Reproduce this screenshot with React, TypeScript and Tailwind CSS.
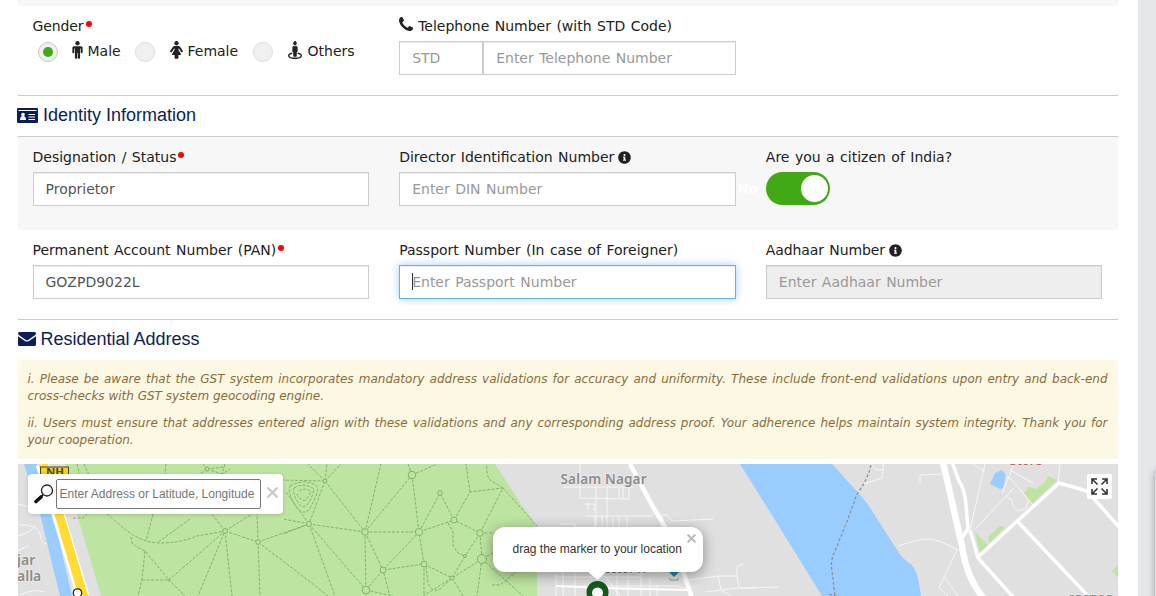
import React from "react";
import { FaInfoCircle, FaStreetView } from "react-icons/fa";

const font = "font-['DejaVu_Sans',sans-serif]";
const label = "flex h-5 items-center whitespace-pre text-[14px] leading-5 [word-spacing:1px] text-[#212121]";
const field =
  "block h-[34px] w-full rounded-none border border-[#ccc] bg-white px-3 text-[14px] [word-spacing:1px] text-[#555] shadow-[inset_0_1px_1px_rgba(0,0,0,0.075)] outline-none placeholder:text-[#999] placeholder:opacity-100";

function Dot() {
  return <span className="mb-[5px] ml-[2px] size-[6px] rounded-full bg-[#f00]" />;
}

function PhoneIcon() {
  return (
    <svg viewBox="0 128 1408 1408" className="mb-[4px] mr-[5px] size-[14px]" fill="#212121">
      <path d="M1408 1240q0 27-10 70.5t-21 68.5q-21 50-122 106-94 51-186 51-27 0-53-3.5t-57.5-12.5-47-14.5-55.5-20.5-49-18q-98-35-175-83-127-79-264-216t-216-264q-48-77-83-175-3-9-18-49t-20.5-55.5-14.5-47-12.5-57.5-3.5-53q0-92 51-186 56-101 106-122 25-11 68.5-21t70.5-10q14 0 21 3 18 6 53 76 11 19 30 54t35 63.5 31 53.5q3 4 17.5 25t21.5 35.5 7 28.5q0 20-28.5 50t-62 55-62 53-28.5 46q0 9 5 22.5t8.5 20.5 14 24 11.5 19q76 137 174 235t235 174q2 1 19 11.5t24 14 20.5 8.5 22.5 5q18 0 46-28.5t53-62 55-62 50-28.5q14 0 28.5 7t35.5 21.5 25 17.5q25 15 53.5 31t63.5 35 54 30q70 35 76 53 3 7 3 21z" />
    </svg>
  );
}

function MaleIcon() {
  return (
    <svg viewBox="0 0 1024 1792" className="h-[18px] w-[11px]" fill="#212121">
      <circle cx="512" cy="224" r="215" />
      <path d="M1024 704v416q0 40-28 68t-68 28-68-28-28-68V744h-64v912q0 46-33 79t-79 33-79-33-33-79v-472h-64v472q0 46-33 79t-79 33-79-33-33-79V744h-64v376q0 40-28 68t-68 28-68-28-28-68V704q0-80 56-136t136-56h640q80 0 136 56t56 136z" />
    </svg>
  );
}

function FemaleIcon() {
  return (
    <svg viewBox="0 0 1280 1792" className="h-[18px] w-[13px]" fill="#212121">
      <circle cx="640" cy="224" r="215" />
      <path d="M1280 1032q0 40-28 68t-68 28q-51 0-80-43L877 744h-45v132l247 411q9 15 9 33 0 26-19 45t-45 19H832v272q0 46-33 79t-79 33H560q-46 0-79-33t-33-79v-272H256q-26 0-45-19t-19-45q0-18 9-33l247-411V744h-45l-227 341q-29 43-80 43-40 0-68-28t-28-68q0-29 16-53l256-384q73-107 176-107h384q103 0 176 107l256 384q16 24 16 53z" />
    </svg>
  );
}

function Radio({ checked = false }: { checked?: boolean }) {
  return (
    <span
      className={
        "flex size-5 items-center justify-center rounded-full border bg-[#f0f0f0] " +
        (checked ? "border-[#b9d3b4]" : "border-[#ddd]")
      }
    >
      {checked && <span className="size-[10px] rounded-full bg-[#41a913]" />}
    </span>
  );
}

const nodes: [number, number, number][] = [
  [225, 531, 2.5], [258, 542, 2.3], [169, 580, 1], [207, 469, 2], [325, 481, 2], [309, 524, 2.5], [365, 532, 3.3],
  [412, 475, 3.8], [419, 532, 3.6], [440, 493, 2.3], [454, 520, 3], [480, 533, 3.3], [383, 570, 3], [424, 564, 3],
  [366, 590, 3.8], [482, 559, 4.5], [452, 578, 2], [465, 556, 1.5],
];

const parkPaths = [
  "M107 514L120 525Q140 543 160 543T197 536L225 531",
  "M153 514L146 541M190 519L157 543M131 537L132 543L137 547L145 551L169 580L185 596",
  "M145 551L142 579L138 596M142 580H169M169 580L225 531L198 596M225 531L232 596M225 531L212 514M225 531L258 542M225 531L252 514",
  "M258 542L257 514M258 542L260 596M258 542L300 574L328 596M258 542L309 524",
  "M77 464L88 513M73 518H83L88 513M84 464L89 475M166 464L165 474M207 469L203 464M207 469L225 467M207 469L200 474M207 469L222 474M225 464L222 474L230 469",
  "M325 481L327 464M325 481L308 464M325 481L280 480M325 481L341 464M325 481L309 524M325 481L365 532M365 532L381 464M365 532L412 475",
  "M412 475L408 464M412 475L437 464M412 475L419 532M365 532H419M365 532L309 524M365 532L366 596M365 532L383 570L390 596",
  "M309 524L283 519M309 524L283 534M309 524L335 596M309 524L366 590M309 524L286 492",
  "M419 532L440 493L454 520L419 532M454 520L470 492L503 488L480 533L454 520M470 492L466 464M503 488L490 480Q486 475 487 464M503 488L537 526",
  "M480 533L482 559M480 533H495M480 533L465 556M448 523L453 532V546L458 553L465 556L452 578L424 564L383 570L366 590",
  "M424 564L419 532L383 570M424 564V596M426 566L428 583Q432 593 440 589L452 578L482 559L498 550M452 578L423 596M452 578L463 596",
  "M482 559L477 596M482 559L523 596M366 590L393 596",
  "M290 486Q304 478 317 486Q320 491 309 510Q303 515 297 508Q287 493 290 486ZM294 488Q304 482 314 489Q312 499 307 505Q303 509 299 504Q292 493 294 488ZM299 491Q305 487 311 492L306 500Q301 502 297 494",
  "M492 585H500L537 555",
];

const minorRoads = [
  "M580 464V498L630 499M563 487H633M596 486V528M607 488V528M629 488V498M623 488V498M619 488V498M585 504H594V511M588 503V510M585 516H653M595 516V528M602 516V528M613 518V528M619 517V528M627 517V528M560 524H575V528",
  "M660 521L663 515L667 515L672 521L713 519",
  "M556 574V596M556 577H640M556 586H677L690 590M563 572V596M575 572V596M617 574V596M628 574V596M641 570V596M650 578V596M657 585V596M604 575L620 596",
  "M683 581L703 578L718 576H737V567L742 564M737 576L739 588L705 592M718 576L721 590L731 596M740 588H756",
  "M870 464L877 470H883V462M883 470L882 478L864 484M920 483V475L943 474",
  "M898 546Q918 539 928 539T958 550M957 550L939 588L948 596M945 578L958 596",
  "M985 464L970 530M973 464L985 472M975 529L1014 488M1014 464L1006 484L1002 494M1006 476L1012 480L1034 506M1010 470L1033 483M1007 497L1012 500L1013 506L1018 511L1026 508L1028 501M1060 464L1058 482",
  "M740 564H743M740 588L778 587",
  "M18 504L29 507M18 525Q38 524 40 534T47 544M18 536Q32 532 35 525M20 595Q34 588 45 592M18 551L29 545",
];

function MapView() {
  return (
    <svg viewBox="18 464 1100 132" className="block h-[132px] w-[1100px]" fontFamily="'Noto Sans', sans-serif">
      <rect x="18" y="464" width="1100" height="132" fill="#e0e0e0" />
      <path d="M65 464H495L523 507Q537 524 537 532V596H101L77 514Z" fill="#bde4a0" />
      <path d="M740 464H832L851 485Q866 500 876 517L899 553Q904 560 911 564Q918 573 919 584L921 596H822L780 528Z" fill="#99ccff" />
      <path d="M24 464H37L53 514L72 596H60L40 514Z" fill="#99ccff" />
      <path d="M42 464L58 514L83 596" stroke="#fff" strokeWidth="13" fill="none" />
      <path d="M43 464L59 514L84 598" stroke="#ffdb33" strokeWidth="9" fill="none" />
      <path d="M995 473L1002 470L1006 475L1003 488L1000 489L990 484Z" fill="#99ccff" />
      <g fill="#bde4a0">
        <path d="M1024 493L1029 487L1036 489L1045 482L1048 476L1057 480L1032 504Z" />
        <path d="M975 532L988 545L980 553Z" />
        <path d="M988 537L1000 526L1005 527L990 543Z" />
        <path d="M1112 571L1118 565V578Z" />
      </g>
      <g fill="none" stroke="#82b46b" strokeWidth="1" strokeDasharray="3 1.5">
        {parkPaths.map((d) => (
          <path key={d} d={d} />
        ))}
      </g>
      <g fill="#bde4a0" stroke="#82b46b" strokeWidth="1">
        {nodes.map(([x, y, r]) => (
          <circle key={x} cx={x} cy={y} r={r} />
        ))}
      </g>
      <g fill="none" stroke="#f7f7f7" strokeWidth="1">
        {minorRoads.map((d) => (
          <path key={d} d={d} />
        ))}
      </g>
      <g fill="none" stroke="#fff" strokeLinejoin="round">
        <path d="M630 464L653 507Q676 543 682 568L692 598" strokeWidth="4.5" />
        <path d="M556 586L600 588L690 590" strokeWidth="2" />
        <path d="M943 462L962 546Q966 578 985 600" strokeWidth="6.5" />
        <path d="M952 462L959 481Q965 490 966 505L968 528L963 537M970 530L978 558L1014 598M978 557L1059 483L1087 491L1120 528M1018 522L1090 598" strokeWidth="3.5" />
      </g>
      <path d="M871 465Q867 481 857 494L848 519L835 551Q830 561 832 571L835 596M829 594L842 598" fill="none" stroke="#8a8f96" strokeWidth="1.2" strokeDasharray="3 2" />
      <g fill="#8c8c8c" stroke="#ececec" strokeWidth="1.5" paintOrder="stroke" fontWeight="600">
        <text x="560.5" y="484" fontSize="13.5" textLength="86">Salam Nagar</text>
        <text x="17" y="565" fontSize="14">jar</text>
        <text x="17" y="581" fontSize="14">alla</text>
        <text x="597" y="573" fontSize="12" fill="#777">Sector H</text>
        <text x="1068" y="604" fontSize="12.5" textLength="46">SECTOR</text>
      </g>
      <text x="1010" y="465" fontSize="12" fontWeight="600" fill="#c9546b" textLength="32">Store</text>
      <rect x="40.5" y="467" width="28" height="11" fill="#f7d417" stroke="#4c4513" />
      <text x="46" y="476" fontSize="10" fontWeight="700" fill="#4c4513" textLength="18" lengthAdjust="spacingAndGlyphs">NH</text>
      <circle cx="77.5" cy="593" r="4.2" fill="#fff" stroke="#222" strokeWidth="1.2" />
      <path d="M666 569H682L674 577Z" fill="#0b8fce" />
      <path d="M670 578V580H678V578" fill="none" stroke="#999" />
      <path d="M597.5 616Q586.5 600 586.5 592A11 11 0 0 1 608.5 592Q608.5 600 597.5 616Z" fill="#14591c" />
      <circle cx="597.5" cy="593" r="5.5" fill="#fff" />
    </svg>
  );
}

export default function App() {
  return (
    <div className={"relative flex h-[596px] w-[1156px] overflow-hidden bg-[#e4e8eb] " + font}>
      <main className="h-full w-[1138px] bg-white pl-[17.5px]">
        <div className="w-[1100px]">
          <div className="h-[6px] bg-[#f7f7f7]" />

          <section className="grid h-[89px] grid-cols-3 pt-[10px]">
            <div className="px-[15px]">
              <div className={label + " tracking-[-0.1px]"}>
                Gender
                <Dot />
              </div>
              <div className="flex h-[30px] items-center pl-[5px] pt-px text-[14px] text-[#212121]">
                <div className="flex w-[97px] items-center">
                  <Radio checked />
                  <span className="ml-[14px] mt-[-4px]"><MaleIcon /></span>
                  <span className="ml-[5px] mt-[-1px]">Male</span>
                </div>
                <div className="flex w-[118px] items-center">
                  <Radio />
                  <span className="ml-[15px] mt-[-4px]"><FemaleIcon /></span>
                  <span className="ml-[5px] mt-[-1px]">Female</span>
                </div>
                <div className="flex items-center">
                  <Radio />
                  <FaStreetView className="ml-[15px] mt-[-3px] h-[18px] w-[14px]" preserveAspectRatio="none" />
                  <span className="ml-[6px] mt-[-1px]">Others</span>
                </div>
              </div>
            </div>
            <div className="px-[15px]">
              <div className={label}>
                <PhoneIcon />
                Telephone Number (with STD Code)
              </div>
              <div className="mt-[5px] flex">
                <div className="w-[84px]">
                  <input className={field} placeholder="STD" />
                </div>
                <div className="flex-1">
                  <input className={field} placeholder="Enter Telephone Number" />
                </div>
              </div>
            </div>
          </section>

          <h4 className="flex h-[41px] items-center border-t border-[#ccc] pb-[2px] font-['Liberation_Sans',sans-serif] text-[18px] text-[#0b1e59]">
            <svg viewBox="0 0 21 15" className="-ml-[0.5px] mr-[5px] h-[15px] w-[21px]">
              <rect width="21" height="15" rx="1" fill="#0b1e59" />
              <path d="M1.5 2.5H19.5M11.5 6.5H18M11.5 9H18M11.5 11.5H18" stroke="#fff" strokeWidth="1" />
              <circle cx="6" cy="6.5" r="1.8" fill="#fff" />
              <path d="M3 12Q3 8 6 8T9 12Z" fill="#fff" />
            </svg>
            Identity Information
          </h4>

          <section className="grid h-[94px] grid-cols-3 border-t border-[#ccc] bg-[#f7f7f7] pt-[10px]">
            <div className="px-[15px]">
              <div className={label}>
                Designation / Status
                <Dot />
              </div>
              <input className={field + " mt-[5px]"} defaultValue="Proprietor" />
            </div>
            <div className="px-[15px]">
              <div className={label}>
                Director Identification Number
                <FaInfoCircle className="ml-[4px] size-[13px]" />
              </div>
              <input className={field + " mt-[5px]"} placeholder="Enter DIN Number" />
            </div>
            <div className="px-[15px]">
              <div className={label}>Are you a citizen of India?</div>
              <div className="relative mt-[5px] flex h-[33px] w-16 items-center justify-end rounded-full bg-[#41a913] pr-[2px]">
                <span className="absolute left-[-28px] top-[9px] text-[13px] font-bold leading-4 text-white">No</span>
                <span className="size-[27px] rounded-full bg-white" />
              </div>
            </div>
          </section>

          <section className="grid h-[89px] grid-cols-3 pt-[10px]">
            <div className="px-[15px]">
              <div className={label}>
                Permanent Account Number (PAN)
                <Dot />
              </div>
              <input className={field + " mt-[5px]"} defaultValue="GOZPD9022L" />
            </div>
            <div className="px-[15px]">
              <div className={label}>Passport Number (In case of Foreigner)</div>
              <div className="relative mt-[5px]">
                <input
                  className={field + " border-[#66afe9]! shadow-[inset_0_1px_1px_rgba(0,0,0,0.075),0_0_8px_rgba(102,175,233,0.6)]!"}
                  placeholder="Enter Passport Number"
                />
                <span className="absolute left-[13px] top-[8px] h-[17px] w-px bg-[#333]" />
              </div>
            </div>
            <div className="pl-[15px] pr-[15.3px]">
              <div className={label + " tracking-[-0.1px]"}>
                Aadhaar Number
                <FaInfoCircle className="ml-[4px] size-[13px]" />
              </div>
              <input className={field + " mt-[5px] bg-[#eee]!"} placeholder="Enter Aadhaar Number" disabled />
            </div>
          </section>

          <h4 className="flex h-[41px] items-center border-t border-[#ccc] pb-[2px] font-['Liberation_Sans',sans-serif] text-[18px] text-[#0b1e59]">
            <svg viewBox="0 0 18 14" className="mr-[5px] h-[14px] w-[18px]" fill="#0b1e59">
              <path d="M0 1.5Q0 0 1.5 0H16.5Q18 0 18 1.5Q18 2.5 16.5 3.6L10.5 7.7Q9 8.7 7.5 7.7L1.5 3.6Q0 2.5 0 1.5Z" />
              <path d="M0 4.2L7 9Q9 10.2 11 9L18 4.2V12.5Q18 14 16.5 14H1.5Q0 14 0 12.5Z" />
            </svg>
            Residential Address
          </h4>

          <div className="h-[99px] bg-[#fcf8e3] px-[10px] pt-[11px] text-justify text-[12px] italic leading-[17px] text-[#8a6d3b]">
            <p>
              i. Please be aware that the GST system incorporates mandatory address validations for accuracy and uniformity. These include front-end validations upon entry and back-end cross-checks with GST system geocoding engine.
            </p>
            <p className="mt-[10px]">
              ii. Users must ensure that addresses entered align with these validations and any corresponding address proof. Your adherence helps maintain system integrity. Thank you for your cooperation.
            </p>
          </div>

          <div className="relative ml-[0.5px] mt-[5px] font-['Liberation_Sans',sans-serif]">
            <MapView />
            <div className="absolute left-[10px] top-[10px] flex h-10 w-[255px] items-center rounded bg-white pl-[6px] shadow-[0_1px_4px_rgba(0,0,0,0.15)]">
              <svg viewBox="0 0 20 20" className="size-5 shrink-0">
                <path d="M7 13L2 17.5" stroke="#111" strokeWidth="3.6" strokeLinecap="round" />
                <path d="M9.5 10L7 13" stroke="#111" strokeWidth="1.5" />
                <circle cx="13" cy="6.5" r="5.5" fill="#fafafa" stroke="#222" strokeWidth="1.3" />
              </svg>
              <input
                className="ml-[2px] h-[30px] w-[205px] rounded-xs border border-[#767676] px-[2.5px] text-[12px] outline-none placeholder:text-[#757575] placeholder:opacity-100"
                placeholder="Enter Address or Latitude, Longitude"
              />
              <svg viewBox="0 0 10 10" className="ml-[6px] mt-[-3px] size-[11px]">
                <path d="M.5 .5L9.5 9.5M9.5 .5L.5 9.5" stroke="#c8c8c8" strokeWidth="2" />
              </svg>
            </div>
            <div className="absolute left-[475px] top-[63px] h-[45px] w-[210px] rounded-[12px] bg-white pl-[19.5px] pt-[13px] text-[12px] leading-[18px] text-[#333] shadow-[0_3px_14px_rgba(0,0,0,0.4)]">
              drag the marker to your location
              <svg viewBox="0 0 9 9" className="absolute left-[194px] top-[7px] size-[9px]">
                <path d="M.6 .6L8.4 8.4M8.4 .6L.6 8.4" stroke="#bbb" strokeWidth="2" />
              </svg>
              <svg viewBox="0 0 20 9" className="absolute left-[94px] top-[44px] h-[9px] w-5">
                <path d="M0 0H20L10.5 9Z" fill="#fff" />
              </svg>
            </div>
            <div className="absolute left-[1069px] top-[10px] flex size-[25px] items-center justify-center rounded-xs bg-white">
              <svg viewBox="0 0 17 17" className="size-[17px]" fill="none" stroke="#333" strokeWidth="1.6">
                <path d="M1 6V1H6M11 1H16V6M16 11V16H11M6 16H1V11M1 1L6.5 6.5M16 1L10.5 6.5M16 16L10.5 10.5M1 16L6.5 10.5" />
              </svg>
            </div>
          </div>
        </div>
      </main>
      <div className="absolute left-[1155px] top-[470px] h-[160px] w-[60px] rounded-[6px] bg-[#dde1e4] shadow-[0_0_7px_rgba(0,0,0,0.35)]" />
    </div>
  );
}
